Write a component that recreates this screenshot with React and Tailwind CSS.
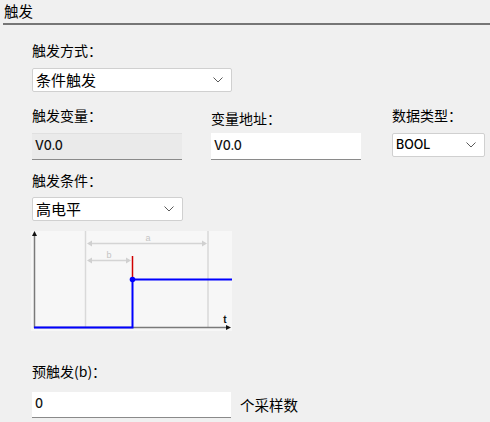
import React from "react";

const cjk = { fontFamily: '"Noto Sans CJK SC", "Noto Sans", sans-serif' };
const latin = { fontFamily: 'Inter, "Liberation Sans", "Noto Sans", sans-serif' };

const Chevron = () => (
  <svg width="10" height="6" viewBox="0 0 10 6" className="shrink-0">
    <path d="M0.5 0.5 L5 5 L9.5 0.5" fill="none" stroke="#5a5a5a" strokeWidth="1" />
  </svg>
);

const Combo = ({ value, className = "", latinText = false }) => (
  <div
    className={`flex items-center justify-between bg-white border border-[#d0d0d0] rounded-[2px] pl-[3px] pr-[8px] ${className}`}
  >
    <span
      className={latinText ? "text-[12.5px] font-medium text-black" : "text-[15px] text-black"}
      style={latinText ? latin : cjk}
    >
      {value}
    </span>
    <Chevron />
  </div>
);

const TextBox = ({ value, disabled = false, className = "" }) => (
  <div
    className={`flex items-center pl-[3px] border-b border-[#8a8a8a] ${
      disabled ? "bg-[#eaeaea] border-t border-t-[#e0e0e0]" : "bg-white"
    } ${className}`}
  >
    <span className="text-[12.5px] font-medium text-[#111]" style={latin}>
      {value}
    </span>
  </div>
);

const Label = ({ children, className = "" }) => (
  <div className={`text-[14px] leading-[20px] text-black ${className}`} style={cjk}>
    {children}
  </div>
);

// timing diagram for the "high level" trigger
const TriggerChart = () => (
  <svg width="201" height="100" viewBox="0 0 201 100" className="block">
    <rect x="0" y="0" width="201" height="100" fill="#f7f7f7" />
    <line x1="54.5" y1="0" x2="54.5" y2="97" stroke="#d9d9d9" strokeWidth="1.5" />
    <line x1="177" y1="0" x2="177" y2="97" stroke="#d9d9d9" strokeWidth="1.5" />
    {/* a arrow */}
    <line x1="58" y1="12.5" x2="174" y2="12.5" stroke="#d4d4d4" strokeWidth="1.5" />
    <path d="M56 12.5 L61 9.5 L61 15.5 Z" fill="#d0d0d0" />
    <path d="M176 12.5 L171 9.5 L171 15.5 Z" fill="#d0d0d0" />
    <text x="117" y="10" fontSize="9" fill="#c4c4c4" textAnchor="middle" fontFamily="Liberation Sans, sans-serif">a</text>
    {/* b arrow */}
    <line x1="58" y1="29.5" x2="98" y2="29.5" stroke="#d4d4d4" strokeWidth="1.5" />
    <path d="M56 29.5 L61 26.5 L61 32.5 Z" fill="#d0d0d0" />
    <path d="M100 29.5 L95 26.5 L95 32.5 Z" fill="#d0d0d0" />
    <text x="78" y="27" fontSize="9" fill="#c4c4c4" textAnchor="middle" fontFamily="Liberation Sans, sans-serif">b</text>
    {/* axes */}
    <line x1="3.5" y1="3" x2="3.5" y2="97" stroke="#7a7a7a" strokeWidth="1.5" />
    <path d="M3.5 0 L1 5 L6 5 Z" fill="#111" />
    <line x1="3" y1="96.5" x2="196" y2="96.5" stroke="#7a7a7a" strokeWidth="1.5" />
    <path d="M200 96.5 L195 94 L195 99 Z" fill="#111" />
    <text x="194" y="92" fontSize="10" fontWeight="bold" fill="#111" textAnchor="middle" fontFamily="Liberation Sans, sans-serif">t</text>
    {/* signal */}
    <line x1="101.5" y1="25" x2="101.5" y2="48" stroke="#d00000" strokeWidth="1.5" />
    <path d="M3 96.5 L101.5 96.5 L101.5 48.5 L201 48.5" fill="none" stroke="#0000ff" strokeWidth="2" />
    <circle cx="101.5" cy="48.5" r="2.8" fill="#0000ff" />
  </svg>
);

export default function App() {
  return (
    <div className="w-[490px] h-[422px] bg-[#f0f0f0] overflow-hidden" style={cjk}>
      {/* title bar */}
      <div className="ml-[3px] border-b-2 border-[#767676]">
        <div className="pl-[1px] h-[23px] text-[14.5px] leading-[21px] text-black" style={cjk}>
          触发
        </div>
      </div>

      <div className="pl-[32px] pt-[15px] flex flex-col">
        <Label>触发方式：</Label>
        <Combo value="条件触发" className="mt-[8px] w-[200px] h-[24px]" />

        <div className="flex mt-[13px]">
          <div className="w-[150px] flex flex-col">
            <Label>触发变量：</Label>
            <TextBox value="V0.0" disabled className="mt-[8px] w-[150px] h-[27px]" />
          </div>
          <div className="ml-[29px] w-[150px] flex flex-col">
            <Label className="mt-[3px]">变量地址：</Label>
            <TextBox value="V0.0" className="mt-[5px] w-[150px] h-[27px]" />
          </div>
          <div className="ml-[31px] w-[93px] flex flex-col">
            <Label>数据类型：</Label>
            <Combo value="BOOL" latinText className="mt-[8px] w-[93px] h-[24px]" />
          </div>
        </div>

        <Label className="mt-[10px]">触发条件：</Label>
        <Combo value="高电平" className="mt-[7px] w-[151px] h-[24px]" />

        <div className="mt-[10px] -ml-[1px]">
          <TriggerChart />
        </div>

        <Label className="mt-[30px]">
          预触发(b)：
        </Label>
        <div className="flex items-center mt-[11px]">
          <TextBox value="0" className="w-[199px] h-[26px]" />
          <span className="ml-[9px] text-[14.5px] text-black" style={cjk}>
            个采样数
          </span>
        </div>
      </div>
    </div>
  );
}
